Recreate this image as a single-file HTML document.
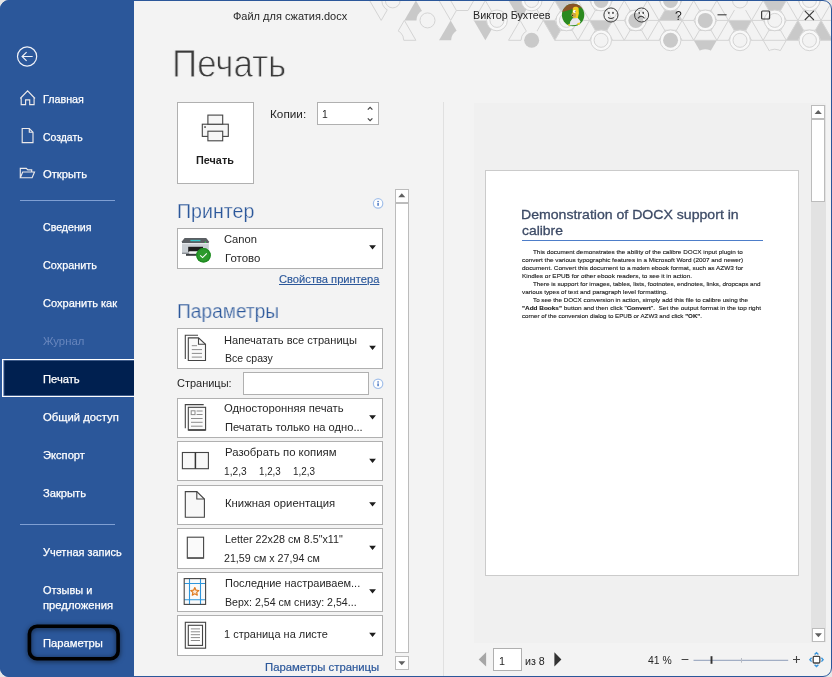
<!DOCTYPE html>
<html lang="ru">
<head>
<meta charset="utf-8">
<title>Печать</title>
<style>
*{box-sizing:border-box;margin:0;padding:0}
html,body{width:832px;height:677px;overflow:hidden;background:#e6e6e6;font-family:"Liberation Sans",sans-serif;}
#win{position:absolute;left:0;top:0;width:832px;height:677px;background:#f3f3f3;border-radius:9px;overflow:hidden}
#frame{position:absolute;left:0;top:0;width:832px;height:677px;border-radius:9px;border:1.3px solid #2b579a;z-index:50}
#side{position:absolute;left:0;top:0;width:133.7px;height:677px;background:#2b579a}
.abs{position:absolute}
.tx{position:absolute;white-space:nowrap;line-height:1;transform-origin:0 0}
.sep{position:absolute;left:20px;width:95px;height:1px;background:#7f9fd3}
.box{position:absolute;background:#fff;border:1px solid #b0b0b0}
</style>
</head>
<body>
<div id="win">
<svg class="abs" style="left:340px;top:0" width="492" height="56" viewBox="340 0 492 56"><defs><clipPath id="pc0"><polygon points="369.6,0.5 392.75,0.5 381.2,20.4"/></clipPath><clipPath id="pc1"><polygon points="404.35,20.4 392.75,40.3 415.9,40.3"/></clipPath><clipPath id="pc2"><polygon points="520.1,20.4 508.5,40.3 531.65,40.3"/></clipPath><clipPath id="pc3"><polygon points="763.15,40.3 786.3,40.3 774.75,60.2"/></clipPath></defs><polygon points="415.9,0.5 404.35,20.4 427.5,20.4" fill="#c9c9c9"/><polygon points="508.5,0.5 531.65,0.5 520.1,20.4" fill="#c9c9c9"/><polygon points="554.8,0.5 577.95,0.5 566.4,20.4" fill="#c9c9c9"/><polygon points="670.55,0.5 659,20.4 682.15,20.4" fill="#c9c9c9"/><polygon points="763.15,0.5 786.3,0.5 774.75,20.4" fill="#c9c9c9"/><polygon points="450.65,20.4 439.05,40.3 462.2,40.3" fill="#c9c9c9"/><polygon points="473.8,20.4 496.95,20.4 485.35,40.3" fill="#c9c9c9"/><polygon points="543.25,20.4 566.4,20.4 554.8,40.3" fill="#c9c9c9"/><polygon points="589.55,20.4 612.7,20.4 601.1,40.3" fill="#c9c9c9"/><polygon points="728.45,20.4 751.6,20.4 740,40.3" fill="#c9c9c9"/><polygon points="797.9,20.4 786.3,40.3 809.45,40.3" fill="#c9c9c9"/><polygon points="821.05,20.4 809.45,40.3 832.6,40.3" fill="#c9c9c9"/><polygon points="693.7,40.3 716.85,40.3 705.3,60.2" fill="#c9c9c9"/><path d="M369.6 0.5L392.75 0.5M392.75 0.5L381.2 20.4M381.2 20.4L369.6 0.5M404.35 20.4L392.75 40.3M392.75 40.3L415.9 40.3M415.9 40.3L404.35 20.4M439.05 0.5L450.65 20.4M462.2 0.5L450.65 20.4M485.35 0.5L473.8 20.4M485.35 0.5L496.95 20.4M520.1 20.4L508.5 40.3M508.5 40.3L531.65 40.3M531.65 40.3L520.1 20.4M763.15 40.3L786.3 40.3M786.3 40.3L774.75 60.2M774.75 60.2L763.15 40.3M543.25 20.4L566.4 20.4M566.4 20.4L589.55 20.4M589.55 20.4L612.7 20.4M612.7 20.4L635.85 20.4M635.85 20.4L659 20.4M659 20.4L682.15 20.4M682.15 20.4L705.3 20.4M705.3 20.4L728.45 20.4M728.45 20.4L751.6 20.4M751.6 20.4L774.75 20.4M774.75 20.4L797.9 20.4M797.9 20.4L821.05 20.4M821.05 20.4L844.2 20.4M844.2 20.4L867.35 20.4M867.35 20.4L890.5 20.4M554.8 40.3L577.95 40.3M577.95 40.3L601.1 40.3M601.1 40.3L624.25 40.3M624.25 40.3L647.4 40.3M647.4 40.3L670.55 40.3M670.55 40.3L693.7 40.3M693.7 40.3L716.85 40.3M716.85 40.3L740 40.3M740 40.3L763.15 40.3M786.3 40.3L809.45 40.3M809.45 40.3L832.6 40.3M832.6 40.3L855.75 40.3M855.75 40.3L878.9 40.3M543.25 20.4L531.65 0.5M554.8 0.5L543.25 20.4M566.4 20.4L554.8 0.5M577.95 0.5L566.4 20.4M589.55 20.4L577.95 0.5M601.1 0.5L589.55 20.4M612.7 20.4L601.1 0.5M624.25 0.5L612.7 20.4M635.85 20.4L624.25 0.5M647.4 0.5L635.85 20.4M659 20.4L647.4 0.5M670.55 0.5L659 20.4M682.15 20.4L670.55 0.5M693.7 0.5L682.15 20.4M705.3 20.4L693.7 0.5M716.85 0.5L705.3 20.4M728.45 20.4L716.85 0.5M740 0.5L728.45 20.4M751.6 20.4L740 0.5M763.15 0.5L751.6 20.4M774.75 20.4L763.15 0.5M786.3 0.5L774.75 20.4M797.9 20.4L786.3 0.5M809.45 0.5L797.9 20.4M821.05 20.4L809.45 0.5M832.6 0.5L821.05 20.4M844.2 20.4L832.6 0.5M855.75 0.5L844.2 20.4M867.35 20.4L855.75 0.5M878.9 0.5L867.35 20.4M543.25 20.4L531.65 40.3M554.8 40.3L543.25 20.4M566.4 20.4L554.8 40.3M577.95 40.3L566.4 20.4M589.55 20.4L577.95 40.3M601.1 40.3L589.55 20.4M612.7 20.4L601.1 40.3M624.25 40.3L612.7 20.4M635.85 20.4L624.25 40.3M647.4 40.3L635.85 20.4M659 20.4L647.4 40.3M670.55 40.3L659 20.4M682.15 20.4L670.55 40.3M693.7 40.3L682.15 20.4M705.3 20.4L693.7 40.3M716.85 40.3L705.3 20.4M728.45 20.4L716.85 40.3M740 40.3L728.45 20.4M751.6 20.4L740 40.3M763.15 40.3L751.6 20.4M774.75 20.4L763.15 40.3M786.3 40.3L774.75 20.4M797.9 20.4L786.3 40.3M809.45 40.3L797.9 20.4M821.05 20.4L809.45 40.3M832.6 40.3L821.05 20.4M844.2 20.4L832.6 40.3M855.75 40.3L844.2 20.4M867.35 20.4L855.75 40.3M878.9 40.3L867.35 20.4M890.5 20.4L878.9 40.3" stroke="#d4d4d4" stroke-width="1" fill="none"/><circle cx="392.75" cy="0.5" r="11" fill="#f3f3f3"/><circle cx="392.75" cy="0.5" r="7.4" fill="#f3f3f3" stroke="#d4d4d4"/><polygon points="473.78,0.5 467.99,10.52 456.41,10.52 450.63,0.5 456.41,-9.52 467.99,-9.52" fill="#f3f3f3" stroke="#d4d4d4"/><circle cx="531.65" cy="0.5" r="10.4" fill="#f8f8f8" stroke="#d4d4d4"/><circle cx="531.65" cy="0.5" r="7" fill="#f3f3f3" stroke="#d4d4d4"/><polygon points="612.68,0.5 606.89,10.52 595.31,10.52 589.52,0.5 595.31,-9.52 606.89,-9.52" fill="#f3f3f3" stroke="#d4d4d4"/><circle cx="601.1" cy="0.5" r="10.4" fill="#f8f8f8" stroke="#d4d4d4"/><circle cx="601.1" cy="0.5" r="7.5" fill="#c9c9c9"/><polygon points="682.12,0.5 676.34,10.52 664.76,10.52 658.97,0.5 664.76,-9.52 676.34,-9.52" fill="#f3f3f3" stroke="#d4d4d4"/><circle cx="670.55" cy="0.5" r="10.4" fill="#f8f8f8" stroke="#d4d4d4"/><circle cx="670.55" cy="0.5" r="7.5" fill="#c9c9c9"/><circle cx="740" cy="0.5" r="11" fill="#f3f3f3"/><circle cx="740" cy="0.5" r="7.5" fill="#f3f3f3" stroke="#d4d4d4"/><polygon points="821.03,0.5 815.24,10.52 803.66,10.52 797.88,0.5 803.66,-9.52 815.24,-9.52" fill="#f3f3f3" stroke="#d4d4d4"/><circle cx="809.45" cy="0.5" r="10.4" fill="#f8f8f8" stroke="#d4d4d4"/><circle cx="809.45" cy="0.5" r="7" fill="#f3f3f3" stroke="#d4d4d4"/><circle cx="427.5" cy="20.4" r="11" fill="#f3f3f3"/><circle cx="427.5" cy="20.4" r="7.5" fill="#f3f3f3" stroke="#d4d4d4"/><circle cx="496.95" cy="20.4" r="10.4" fill="#f8f8f8" stroke="#d4d4d4"/><circle cx="496.95" cy="20.4" r="7" fill="#f3f3f3" stroke="#d4d4d4"/><polygon points="577.98,20.4 572.19,30.42 560.61,30.42 554.82,20.4 560.61,10.38 572.19,10.38" fill="#f3f3f3" stroke="#d4d4d4"/><circle cx="566.4" cy="20.4" r="10.4" fill="#f8f8f8" stroke="#d4d4d4"/><circle cx="566.4" cy="20.4" r="7" fill="#f3f3f3" stroke="#d4d4d4"/><polygon points="647.42,20.4 641.64,30.42 630.06,30.42 624.27,20.4 630.06,10.38 641.64,10.38" fill="#f3f3f3" stroke="#d4d4d4"/><circle cx="635.85" cy="20.4" r="10.4" fill="#f8f8f8" stroke="#d4d4d4"/><circle cx="635.85" cy="20.4" r="7.5" fill="#c9c9c9"/><polygon points="716.88,20.4 711.09,30.42 699.51,30.42 693.72,20.4 699.51,10.38 711.09,10.38" fill="#f3f3f3" stroke="#d4d4d4"/><circle cx="705.3" cy="20.4" r="10.4" fill="#f8f8f8" stroke="#d4d4d4"/><circle cx="705.3" cy="20.4" r="7.5" fill="#c9c9c9"/><polygon points="786.33,20.4 780.54,30.42 768.96,30.42 763.17,20.4 768.96,10.38 780.54,10.38" fill="#f3f3f3" stroke="#d4d4d4"/><circle cx="774.75" cy="20.4" r="10.4" fill="#f8f8f8" stroke="#d4d4d4"/><circle cx="774.75" cy="20.4" r="7" fill="#f3f3f3" stroke="#d4d4d4"/><polygon points="855.78,20.4 849.99,30.42 838.41,30.42 832.62,20.4 838.41,10.38 849.99,10.38" fill="#f3f3f3" stroke="#d4d4d4"/><circle cx="844.2" cy="20.4" r="10.4" fill="#f8f8f8" stroke="#d4d4d4"/><circle cx="844.2" cy="20.4" r="7" fill="#f3f3f3" stroke="#d4d4d4"/><circle cx="392.75" cy="40.3" r="11" fill="#f3f3f3"/><circle cx="462.2" cy="40.3" r="11" fill="#f3f3f3"/><circle cx="531.65" cy="40.3" r="10.6" fill="#f3f3f3"/><circle cx="531.65" cy="40.3" r="7.5" fill="#c9c9c9"/><path d="M589.52 40.3L595.31 30.28L606.89 30.28L612.68 40.3" fill="#f3f3f3" stroke="#d4d4d4"/><circle cx="601.1" cy="40.3" r="10.4" fill="#f8f8f8" stroke="#d4d4d4"/><circle cx="601.1" cy="40.3" r="7" fill="#f3f3f3" stroke="#d4d4d4"/><path d="M658.97 40.3L664.76 30.28L676.34 30.28L682.12 40.3" fill="#f3f3f3" stroke="#d4d4d4"/><circle cx="670.55" cy="40.3" r="10.4" fill="#f8f8f8" stroke="#d4d4d4"/><circle cx="670.55" cy="40.3" r="7.5" fill="#c9c9c9"/><path d="M728.42 40.3L734.21 30.28L745.79 30.28L751.58 40.3" fill="#f3f3f3" stroke="#d4d4d4"/><circle cx="740" cy="40.3" r="10.4" fill="#f8f8f8" stroke="#d4d4d4"/><circle cx="740" cy="40.3" r="7" fill="#f3f3f3" stroke="#d4d4d4"/><path d="M797.88 40.3L803.66 30.28L815.24 30.28L821.03 40.3" fill="#f3f3f3" stroke="#d4d4d4"/><circle cx="809.45" cy="40.3" r="10.4" fill="#f8f8f8" stroke="#d4d4d4"/><circle cx="809.45" cy="40.3" r="7" fill="#f3f3f3" stroke="#d4d4d4"/><circle cx="427.5" cy="60.2" r="11" fill="#f3f3f3"/><circle cx="496.95" cy="60.2" r="11" fill="#f3f3f3"/><circle cx="566.4" cy="60.2" r="11" fill="#f3f3f3"/><circle cx="635.85" cy="60.2" r="11" fill="#f3f3f3"/><circle cx="705.3" cy="60.2" r="11" fill="#f3f3f3"/><circle cx="774.75" cy="60.2" r="11" fill="#f3f3f3"/><circle cx="844.2" cy="60.2" r="11" fill="#f3f3f3"/><circle cx="392.75" cy="0.5" r="11" fill="none" stroke="#d4d4d4" clip-path="url(#pc0)"/><circle cx="392.75" cy="40.3" r="11" fill="none" stroke="#d4d4d4" clip-path="url(#pc1)"/><circle cx="531.65" cy="40.3" r="10.6" fill="none" stroke="#d4d4d4" clip-path="url(#pc2)"/><circle cx="774.75" cy="60.2" r="11" fill="none" stroke="#d4d4d4" clip-path="url(#pc3)"/></svg>
<div id="side">
  <svg class="abs" style="left:15px;top:44px" width="25" height="25" viewBox="15 44 25 25" fill="none" stroke="#f0f2f8" stroke-width="1.2"><circle cx="27.1" cy="56.5" r="9.6"/><path d="M32.7 56.5H22M26.6 52.1L22.1 56.5l4.5 4.4"/></svg>
  <svg class="abs" style="left:15px;top:86px" width="25" height="96" viewBox="15 86 25 96" fill="none" stroke="#ece9ea" stroke-width="1.15" stroke-linejoin="miter">
    <path d="M20.2 98.5L27.6 90.8L35 98.5M21.2 97.6V104.6H25.6V99.9H29.7V104.6H34.1V97.6"/>
    <path d="M22.2 128.5H29.3L33 132.2V142.6H22.2ZM29.3 128.5V132.2H33"/>
    <path d="M20.3 177.6V168.3H26.3L27.8 169.8H31.7V172M20.3 177.7L22.7 172H34.5L32.1 177.7Z"/>
  </svg>
  <div class="sep" style="top:200.1px"></div>
  <div class="abs" style="left:1.6px;top:359.3px;width:132.1px;height:38px;background:#002050;border:1.6px solid #fff;border-right:none;box-shadow:inset .6px 0 0 .6px #7f98c4"></div>
  <div class="sep" style="top:524px"></div>
  <svg class="abs" style="left:18px;top:614px;filter:drop-shadow(0 1.5px 2.5px rgba(0,0,0,.6))" width="112" height="58" viewBox="18 614 112 58" fill="none"><rect x="29.4" y="626.3" width="88.7" height="32.5" rx="7.6" stroke="#000" stroke-width="3.6"/></svg>
</div>

<!-- print button -->
<div class="box" style="left:176.5px;top:102px;width:77.5px;height:82px"></div>
<div class="box" style="left:316.6px;top:102px;width:62.2px;height:23px"></div>

<!-- dropdowns -->
<div class="box" style="left:176.5px;top:227.6px;width:206.5px;height:41px"></div>
<div class="box" style="left:176.5px;top:328.1px;width:206.5px;height:40.8px"></div>
<div class="box" style="left:243px;top:371.5px;width:126px;height:23px"></div>
<div class="box" style="left:176.5px;top:397.6px;width:206.5px;height:40.3px"></div>
<div class="box" style="left:176.5px;top:441.1px;width:206.5px;height:40.4px"></div>
<div class="box" style="left:176.5px;top:484.6px;width:206.5px;height:40.4px"></div>
<div class="box" style="left:176.5px;top:528.1px;width:206.5px;height:40.8px"></div>
<div class="box" style="left:176.5px;top:571.7px;width:206.5px;height:40.8px"></div>
<div class="box" style="left:176.5px;top:615.2px;width:206.5px;height:40.7px"></div>

<!-- settings scrollbar -->
<div class="box" style="left:395px;top:188.7px;width:14px;height:14.2px;border-color:#bcbcbc"></div>
<div class="box" style="left:395px;top:202.7px;width:14px;height:450.3px;border-color:#bcbcbc"></div>
<div class="box" style="left:395px;top:656.2px;width:14px;height:13.8px;border-color:#bcbcbc"></div>


<!-- icons: main column -->
<svg class="abs" style="left:176px;top:100px;z-index:5" width="240" height="577" viewBox="176 100 240 577" fill="none">
  <!-- print button icon -->
  <g stroke="#444" stroke-width="1.1" fill="#f6f6f6">
    <rect x="202.3" y="124.2" width="26" height="12.2"/>
    <rect x="207.9" y="115.1" width="14.8" height="9.1"/>
    <rect x="207.9" y="131.2" width="14.8" height="9.6"/>
  </g>
  <rect x="204.3" y="126.3" width="1.5" height="1.5" fill="#333"/>
  <!-- spinner -->
  <path d="M367.8 109.6L370.1 107.3L372.4 109.6M367.8 118.3L370.1 120.6L372.4 118.3" stroke="#444" stroke-width="1.2"/>
  <!-- info icons -->
  <g>
    <circle cx="378.1" cy="203.4" r="4.7" fill="#fff" stroke="#a3c0ea" stroke-width="1.2"/>
    <rect x="377.2" y="200.9" width="1.8" height="1.3" fill="#6a8fcd"/><rect x="377.2" y="203" width="1.8" height="2.8" fill="#6a8fcd"/>
    <circle cx="378.1" cy="383.8" r="4.7" fill="#fff" stroke="#a3c0ea" stroke-width="1.2"/>
    <rect x="377.2" y="381.3" width="1.8" height="1.3" fill="#6a8fcd"/><rect x="377.2" y="383.4" width="1.8" height="2.8" fill="#6a8fcd"/>
  </g>
  <!-- printer device -->
  <g>
    <path d="M184.6 238H206.2L208.8 241.3V243H182V241.3Z" fill="#5b5f63"/>
    <rect x="182" y="243" width="26.8" height="10.8" fill="#c9ced3"/>
    <rect x="182" y="243" width="26.8" height="1.2" fill="#e4e7ea"/>
    <rect x="182" y="252.6" width="26.8" height="1.4" fill="#8e9399"/>
    <rect x="188.2" y="246.8" width="14.8" height="5" fill="#1d1d1d"/>
    <rect x="189.2" y="251.3" width="12.8" height="2.6" fill="#f4f4f4"/>
    <rect x="186" y="253.9" width="15" height="1.9" fill="#3a3d40"/>
    <rect x="190.4" y="239.9" width="10" height="1.3" fill="#35c6c9"/>
    <circle cx="205.4" cy="242.3" r=".8" fill="#39d353"/>
    <circle cx="203.5" cy="255.3" r="7.3" fill="#2c9a2c"/>
    <circle cx="203.5" cy="255.3" r="6.6" fill="none" stroke="#1f8a22" stroke-width="1.2"/>
    <path d="M200.2 255.4L202.6 257.6L206.8 253.4" stroke="#fff" stroke-width="1.1"/>
  </g>
  <!-- dd1: pages -->
  <g stroke="#444" stroke-width="1.1">
    <path d="M185.3 358.9V335.3H198"/>
    <path d="M188.3 337.9H198.5L205.5 344.3V360.5H188.3Z" fill="#fafafa"/>
    <path d="M198.5 337.9V344.3H205.5" />
    <path d="M191.8 345.7H197M191.8 349.6H202M191.8 353.4H202M191.8 357.1H202" stroke="#8c8c8c" stroke-width="1"/>
  </g>
  <!-- dd2: one-sided -->
  <g stroke="#444" stroke-width="1.1">
    <path d="M185.3 428.2V404.6H203.7"/>
    <rect x="188.3" y="407.3" width="17.3" height="22.7" fill="#fafafa"/>
    <path d="M188.3 430H205.6" stroke-width="1.6"/>
    <rect x="191.2" y="410.8" width="3.8" height="3.8" stroke="#8c8c8c" stroke-width="1" fill="#fff"/>
    <path d="M196.6 411H202.6M196.6 414.5H202.6M191 418.5H202.6M191 422.3H202.6M191 426.2H202.6" stroke="#8c8c8c" stroke-width="1"/>
  </g>
  <!-- dd3: collate -->
  <g stroke="#444" stroke-width="1.1">
    <rect x="182.4" y="452.5" width="26" height="16.2" fill="#f8f8f8"/>
    <path d="M195.4 452.5V468.7" stroke="#333" stroke-width="1.5"/>
  </g>
  <!-- dd4: portrait -->
  <g stroke="#444" stroke-width="1.1">
    <path d="M185.3 491.6H196.8L204.4 499V517.3H185.3Z" fill="#f8f8f8"/>
    <path d="M196.8 491.6V499H204.4"/>
  </g>
  <!-- dd5: letter -->
  <rect x="187.3" y="537.2" width="16.3" height="20.9" fill="#fafafa" stroke="#444" stroke-width="1.1"/>
  <path d="M187.3 558.1H203.6" stroke="#555" stroke-width="1.5"/>
  <!-- dd6: margins -->
  <g>
    <rect x="184.2" y="578.6" width="21.4" height="25.8" fill="#fafafa"/>
    <path d="M189.5 578.6V604.4M200.5 578.6V604.4M184.2 583.5H205.6M184.2 599.8H205.6" stroke="#2e96dc" stroke-width="1.1"/>
    <rect x="184.2" y="578.6" width="21.4" height="25.8" stroke="#444" stroke-width="1.1"/>
    <path d="M194.8 587.6L196 590.2L198.8 590.5L196.7 592.4L197.3 595.2L194.8 593.8L192.3 595.2L192.9 592.4L190.8 590.5L193.6 590.2Z" stroke="#e07a1f" stroke-width="1.2" fill="#fbe9d9" stroke-linejoin="round"/>
  </g>
  <!-- dd7: 1 page per sheet -->
  <g stroke="#444" stroke-width="1.1">
    <rect x="185.3" y="622.3" width="20.3" height="25.9" fill="#fafafa"/>
    <rect x="188.3" y="625.3" width="14.2" height="20.1" fill="#fff"/>
    <path d="M190.8 628.9H200M190.8 631.8H200M190.8 634.7H200M190.8 637.6H200M190.8 640.5H200" stroke="#8c8c8c" stroke-width="1"/>
  </g>
  <path d="M369.15 245.15H375.95L372.55 249.45ZM369.15 345.65H375.95L372.55 349.95ZM369.15 415.15H375.95L372.55 419.45ZM369.15 458.65H375.95L372.55 462.95ZM369.15 502.15H375.95L372.55 506.45ZM369.15 545.65H375.95L372.55 549.95ZM369.15 589.25H375.95L372.55 593.55ZM369.15 632.75H375.95L372.55 637.05Z" fill="#1e1e1e"/>
  <!-- scrollbar arrows -->
  <path d="M398.3 197.2L401.8 193.2L405.3 197.2Z" fill="#606060"/>
  <path d="M398.3 661.2L401.8 665.2L405.3 661.2Z" fill="#606060"/>
</svg>

<!-- divider -->
<div class="abs" style="left:443px;top:102px;width:1px;height:575px;background:#e0e0e0"></div>

<!-- preview -->
<div class="abs" style="left:473.5px;top:102.5px;width:352px;height:540.5px;background:#f0f0f0"></div>
<div class="abs" style="left:811px;top:105px;width:14.5px;height:537px;background:#e2e2e2"></div>
<div class="box" style="left:811px;top:105.2px;width:14.4px;height:13.6px;border-color:#bcbcbc"></div>
<div class="box" style="left:811px;top:118.8px;width:14.4px;height:83px;border-color:#bcbcbc"></div>
<div class="box" style="left:811.6px;top:628.4px;width:13.8px;height:13.6px;border-color:#bcbcbc"></div>
<div class="abs" style="left:484.6px;top:169.7px;width:314.3px;height:406.4px;background:#fff;border:1px solid #cbcbcb"></div>
<div class="abs" style="left:522px;top:239.6px;width:240.6px;height:1.1px;background:#4d7dc9"></div>

<div class="box" style="left:492.8px;top:648.3px;width:29.2px;height:22.7px"></div>


<!-- title bar icons -->
<svg class="abs" style="left:556px;top:0;z-index:6" width="276" height="32" viewBox="556 0 276 32" fill="none">
  <defs><clipPath id="av"><circle cx="573.1" cy="15" r="11.2"/></clipPath></defs>
  <g clip-path="url(#av)">
    <rect x="561" y="3" width="25" height="25" fill="#2b8a1f"/>
    <path d="M561 3H586V9.6L580 7.4L572 9.2L564 11.5L561 12.5Z" fill="#8a5226"/>
    <path d="M572.8 8.4C573 6.4 578.3 5.8 578.6 8.6L578.9 13.5L577.8 18H573.6L571.9 15.6L572.6 12.2Z" fill="#f4cf1f"/>
    <path d="M571.6 13.4L574.6 12.6L576.3 14.6L575.6 17.2L573 17.4L571.4 15.6Z" fill="#c9a646"/>
    <circle cx="574.4" cy="11.5" r="1.4" fill="#fff"/><circle cx="575.2" cy="11.5" r=".45" fill="#222"/>
    <circle cx="572.6" cy="15.3" r=".6" fill="#2a1a0a"/>
    <path d="M572.7 18.2L577.8 18L580.6 21.2L579.6 23.6L575.5 25L569.3 25.4L570.3 21.6Z" fill="#e9e7ee"/>
    <path d="M577.2 23.2L579.8 22.4L580.4 24.4L577.8 25.4Z" fill="#f4cf1f"/>
    <path d="M567.9 24.4L570 24L570 26.2L568.2 26.4Z" fill="#f4cf1f"/>
  </g>
  <g stroke="#3c3c3c" stroke-width="1">
    <circle cx="610.95" cy="15" r="7.05"/>
    <path d="M608.2 17.3Q610.95 19.7 613.8 17.3" stroke-width="1.1"/>
    <circle cx="641.6" cy="15" r="7.05"/>
    <path d="M637.9 18.3Q641.2 14.2 644.5 18.3" stroke-width="1.1"/>
    <path d="M717.5 14.8H726.6" stroke-width="1.1"/>
    <rect x="761.6" y="11" width="8" height="8" rx="1" stroke-width="1.2"/>
    <path d="M804.8 10.9L813.9 20M813.9 10.9L804.8 20" stroke-width="1.1"/>
  </g>
  <g fill="#3c3c3c"><rect x="608.2" y="11.8" width="1.3" height="2.1" rx=".5"/><rect x="612.3" y="11.8" width="1.3" height="2.1" rx=".5"/>
  <rect x="638.6" y="11.8" width="1.3" height="2.1" rx=".5"/><rect x="642.6" y="11.8" width="1.3" height="2.1" rx=".5"/></g>
</svg>

<!-- preview controls -->
<svg class="abs" style="left:470px;top:100px;z-index:6" width="362" height="577" viewBox="470 100 362 577" fill="none">
  <path d="M814.6 114L818.2 110L821.8 114Z" fill="#606060"/>
  <path d="M814.9 633.2L818.4 637.2L821.9 633.2Z" fill="#606060"/>
  <path d="M486.1 652.3V666.5L478.7 659.4Z" fill="#a6a6a6"/>
  <path d="M554.4 652.3V666.5L561.4 659.4Z" fill="#333"/>
  <path d="M681.6 659.5H688.4M793 659.5H800M796.5 656V663" stroke="#444" stroke-width="1.1"/>
  <path d="M693.5 660.3H788.2" stroke="#8e9db8" stroke-width="1"/>
  <path d="M741.5 658V662.7" stroke="#b8bcc4" stroke-width="1"/>
  <path d="M711.5 656.2V663.8" stroke="#333" stroke-width="1.9"/>
  <rect x="813.2" y="656.4" width="6.6" height="6.6" rx="1" fill="#fff" stroke="#444" stroke-width="1.3"/>
  <path d="M814.6 654.6L816.5 652.8L818.4 654.6M814.6 664.8L816.5 666.6L818.4 664.8M811.6 657.8L809.9 659.7L811.6 661.6M821.4 657.8L823.1 659.7L821.4 661.6" stroke="#3a96dd" stroke-width="1.4"/>
</svg>

<div class="tx" style="left:43.40px;top:93.95px;font-size:11.2px;color:#fff;transform:scaleX(0.9595);-webkit-text-stroke:.25px #fff;">Главная</div>
<div class="tx" style="left:43.40px;top:131.75px;font-size:11.2px;color:#fff;transform:scaleX(0.9324);-webkit-text-stroke:.25px #fff;">Создать</div>
<div class="tx" style="left:43.20px;top:169.45px;font-size:11.2px;color:#fff;transform:scaleX(1.0019);-webkit-text-stroke:.25px #fff;">Открыть</div>
<div class="tx" style="left:43.04px;top:222.15px;font-size:11.2px;color:#fff;transform:scaleX(0.9496);-webkit-text-stroke:.25px #fff;">Сведения</div>
<div class="tx" style="left:43.40px;top:260.15px;font-size:11.2px;color:#fff;transform:scaleX(0.9702);-webkit-text-stroke:.25px #fff;">Сохранить</div>
<div class="tx" style="left:43.40px;top:298.45px;font-size:11.2px;color:#fff;transform:scaleX(0.9885);-webkit-text-stroke:.25px #fff;">Сохранить как</div>
<div class="tx" style="left:43.36px;top:373.95px;font-size:11.2px;color:#fff;transform:scaleX(1.0004);-webkit-text-stroke:.25px #fff;">Печать</div>
<div class="tx" style="left:43.40px;top:411.95px;font-size:11.2px;color:#fff;transform:scaleX(1.0079);-webkit-text-stroke:.25px #fff;">Общий доступ</div>
<div class="tx" style="left:43.40px;top:449.95px;font-size:11.2px;color:#fff;transform:scaleX(0.9974);-webkit-text-stroke:.25px #fff;">Экспорт</div>
<div class="tx" style="left:43.36px;top:487.95px;font-size:11.2px;color:#fff;transform:scaleX(0.9987);-webkit-text-stroke:.25px #fff;">Закрыть</div>
<div class="tx" style="left:43.20px;top:546.55px;font-size:11.2px;color:#fff;transform:scaleX(0.9779);-webkit-text-stroke:.25px #fff;">Учетная запись</div>
<div class="tx" style="left:43.40px;top:584.95px;font-size:11.2px;color:#fff;transform:scaleX(0.9783);-webkit-text-stroke:.25px #fff;">Отзывы и</div>
<div class="tx" style="left:43.40px;top:600.05px;font-size:11.2px;color:#fff;transform:scaleX(1.0048);-webkit-text-stroke:.25px #fff;">предложения</div>
<div class="tx" style="left:43.40px;top:637.95px;font-size:11.2px;color:#fff;transform:scaleX(1.0035);-webkit-text-stroke:.25px #fff;">Параметры</div>
<div class="tx" style="left:43.40px;top:336.15px;font-size:11.2px;color:#6886bd;transform:scaleX(1.0126);">Журнал</div>
<div class="tx" style="left:232.70px;top:10.80px;font-size:11.2px;color:#262626;transform:scaleX(0.9829);">Файл для сжатия.docx</div>
<div class="tx" style="left:472.62px;top:10.20px;font-size:11.2px;color:#262626;transform:scaleX(0.9581);">Виктор Бухтеев</div>
<div class="tx" style="left:171.93px;top:43.70px;font-size:39.5px;color:#3a3a3a;transform:scaleX(0.8828);-webkit-text-stroke:.9px #f3f3f3;will-change:transform;">Печать</div>
<div class="tx" style="left:196.00px;top:154.50px;font-size:11.2px;color:#1e1e1e;transform:scaleX(0.9692);font-weight:700;">Печать</div>
<div class="tx" style="left:269.90px;top:109.40px;font-size:11.2px;color:#262626;transform:scaleX(1.0509);">Копии:</div>
<div class="tx" style="left:322.30px;top:109.40px;font-size:11.2px;color:#262626;transform:scaleX(0.9300);">1</div>
<div class="tx" style="left:176.70px;top:201.80px;font-size:19.6px;color:#2b579a;transform:scaleX(0.9987);-webkit-text-stroke:.25px #f3f3f3;will-change:transform;">Принтер</div>
<div class="tx" style="left:177.14px;top:301.80px;font-size:19.6px;color:#2b579a;transform:scaleX(0.9776);-webkit-text-stroke:.25px #f3f3f3;will-change:transform;">Параметры</div>
<div class="tx" style="left:224.20px;top:233.70px;font-size:11.2px;color:#262626;transform:scaleX(0.9986);">Canon</div>
<div class="tx" style="left:224.60px;top:252.60px;font-size:11.2px;color:#262626;transform:scaleX(1.0227);">Готово</div>
<div class="tx" style="left:279.00px;top:273.50px;font-size:11.2px;color:#2b579a;transform:scaleX(0.9975);text-decoration:underline;-webkit-text-stroke:.15px #2b579a;">Свойства принтера</div>
<div class="tx" style="left:224.00px;top:334.60px;font-size:11.2px;color:#262626;transform:scaleX(0.9934);">Напечатать все страницы</div>
<div class="tx" style="left:224.60px;top:353.40px;font-size:11.2px;color:#262626;transform:scaleX(0.9395);">Все сразу</div>
<div class="tx" style="left:177.00px;top:378.20px;font-size:11.2px;color:#262626;transform:scaleX(0.9816);">Страницы:</div>
<div class="tx" style="left:224.20px;top:403.30px;font-size:11.2px;color:#262626;transform:scaleX(1.0056);">Односторонняя печать</div>
<div class="tx" style="left:224.60px;top:422.20px;font-size:11.2px;color:#262626;transform:scaleX(0.9968);">Печатать только на одно...</div>
<div class="tx" style="left:224.80px;top:446.60px;font-size:11.2px;color:#262626;transform:scaleX(1.0159);">Разобрать по копиям</div>
<div class="tx" style="left:224.36px;top:465.50px;font-size:11.2px;color:#262626;transform:scaleX(0.9086);">1,2,3</div>
<div class="tx" style="left:259.30px;top:465.50px;font-size:11.2px;color:#262626;transform:scaleX(0.8718);">1,2,3</div>
<div class="tx" style="left:293.18px;top:465.50px;font-size:11.2px;color:#262626;transform:scaleX(0.8852);">1,2,3</div>
<div class="tx" style="left:224.60px;top:497.90px;font-size:11.2px;color:#262626;transform:scaleX(1.0104);">Книжная ориентация</div>
<div class="tx" style="left:224.60px;top:533.60px;font-size:11.2px;color:#262626;transform:scaleX(0.9630);">Letter 22x28 см 8.5"x11"</div>
<div class="tx" style="left:224.40px;top:552.50px;font-size:11.2px;color:#262626;transform:scaleX(0.9540);">21,59 см x 27,94 см</div>
<div class="tx" style="left:224.70px;top:578.20px;font-size:11.2px;color:#262626;transform:scaleX(0.9816);">Последние настраиваем...</div>
<div class="tx" style="left:224.70px;top:596.70px;font-size:11.2px;color:#262626;transform:scaleX(0.9481);">Верх: 2,54 см снизу: 2,54...</div>
<div class="tx" style="left:223.83px;top:628.60px;font-size:11.2px;color:#262626;transform:scaleX(0.9819);">1 страница на листе</div>
<div class="tx" style="left:265.00px;top:662.00px;font-size:11.2px;color:#2b579a;transform:scaleX(1.0129);-webkit-text-stroke:.2px #2b579a;">Параметры страницы</div>
<div class="tx" style="left:498.70px;top:654.70px;font-size:11.6px;color:#262626;transform:scaleX(0.9300);">1</div>
<div class="tx" style="left:525.30px;top:654.70px;font-size:11.6px;color:#262626;transform:scaleX(0.9232);">из 8</div>
<div class="tx" style="left:648.20px;top:653.80px;font-size:11.6px;color:#262626;transform:scaleX(0.8944);">41 %</div>
<div class="tx" style="left:675.00px;top:9.00px;font-size:13.5px;color:#262626;transform:scaleX(0.9000);">?</div>
<div class="tx" style="left:521.14px;top:207.80px;font-size:13.3px;color:#3d4b66;transform:scaleX(1.0595);-webkit-text-stroke:.3px #3d4b66;">Demonstration of DOCX support in</div>
<div class="tx" style="left:522.30px;top:223.70px;font-size:13.3px;color:#3d4b66;transform:scaleX(1.0445);-webkit-text-stroke:.3px #3d4b66;">calibre</div>
<div class="tx" style="left:533.40px;top:248.75px;font-size:6.0px;color:#1a1a1a;-webkit-text-stroke:.12px #1a1a1a;transform:scaleX(1.0568)">This document demonstrates the ability of the calibre DOCX input plugin to</div>
<div class="tx" style="left:522.00px;top:256.83px;font-size:6.0px;color:#1a1a1a;-webkit-text-stroke:.12px #1a1a1a;transform:scaleX(1.0596)">convert the various typographic features in a Microsoft Word (2007 and newer)</div>
<div class="tx" style="left:522.00px;top:264.92px;font-size:6.0px;color:#1a1a1a;-webkit-text-stroke:.12px #1a1a1a;transform:scaleX(1.0697)">document. Convert this document to a <span style='font-size:.8em'>modern</span> ebook format, such as AZW3 for</div>
<div class="tx" style="left:522.00px;top:273.00px;font-size:6.0px;color:#1a1a1a;-webkit-text-stroke:.12px #1a1a1a;transform:scaleX(1.0708)">Kindles or EPUB for other ebook readers, to see it in action.</div>
<div class="tx" style="left:533.40px;top:281.09px;font-size:6.0px;color:#1a1a1a;-webkit-text-stroke:.12px #1a1a1a;transform:scaleX(1.0482)">There is support for images, tables, lists, footnotes, endnotes, links, dropcaps and</div>
<div class="tx" style="left:522.00px;top:289.18px;font-size:6.0px;color:#1a1a1a;-webkit-text-stroke:.12px #1a1a1a;transform:scaleX(1.0552)">various types of text and paragraph level formatting.</div>
<div class="tx" style="left:533.40px;top:297.26px;font-size:6.0px;color:#1a1a1a;-webkit-text-stroke:.12px #1a1a1a;transform:scaleX(1.0453)">To see the DOCX conversion in action, simply add this file to calibre using the</div>
<div class="tx" style="left:522.00px;top:305.35px;font-size:6.0px;color:#1a1a1a;-webkit-text-stroke:.12px #1a1a1a;transform:scaleX(1.0698)"><b>"Add Books"</b> button and then click "<b>Convert</b>".&nbsp; Set the output format in the top right</div>
<div class="tx" style="left:522.00px;top:313.43px;font-size:6.0px;color:#1a1a1a;-webkit-text-stroke:.12px #1a1a1a;transform:scaleX(1.0298)">corner of the conversion dialog to EPUB or AZW3 and click <b>"OK"</b>.</div>
</div>
<div id="frame"></div>
</body>
</html>
